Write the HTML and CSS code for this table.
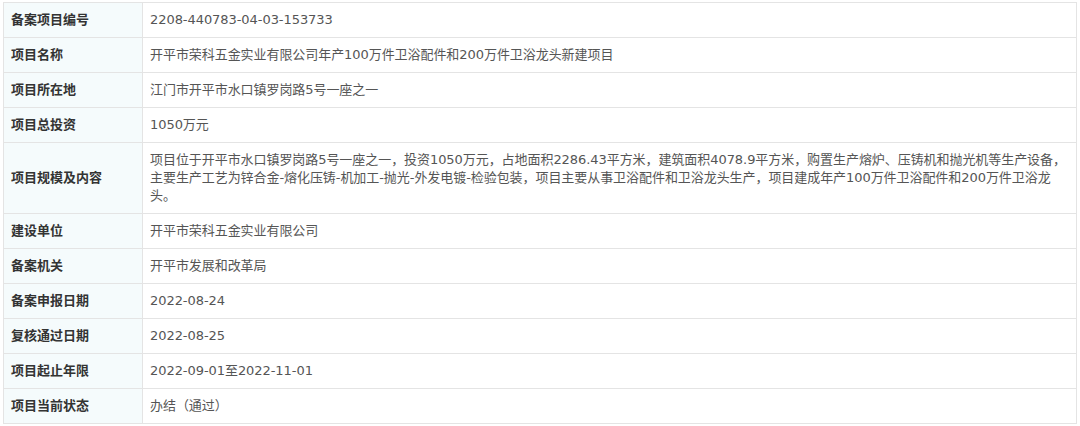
FILE: index.html
```html
<!DOCTYPE html>
<html lang="zh-CN">

<head>
    <meta charset="UTF-8">
    <meta name="viewport" content="width=device-width, initial-scale=1.0">
    <title>项目备案信息</title>
    <link rel="stylesheet" href="styles.css">
</head>

<body>
    <div class="record-wrap">
        <table class="record-table">
            <tbody>
                <tr>
                    <th>备案项目编号</th>
                    <td>2208-440783-04-03-153733</td>
                </tr>
                <tr>
                    <th>项目名称</th>
                    <td>开平市荣科五金实业有限公司年产100万件卫浴配件和200万件卫浴龙头新建项目</td>
                </tr>
                <tr>
                    <th>项目所在地</th>
                    <td>江门市开平市水口镇罗岗路5号一座之一</td>
                </tr>
                <tr>
                    <th>项目总投资</th>
                    <td>1050万元</td>
                </tr>
                <tr>
                    <th>项目规模及内容</th>
                    <td>项目位于开平市水口镇罗岗路5号一座之一，投资1050万元，占地面积2286.43平方米，建筑面积4078.9平方米，购置生产熔炉、压铸机和抛光机等生产设备，主要生产工艺为锌合金-熔化压铸-机加工-抛光-外发电镀-检验包装，项目主要从事卫浴配件和卫浴龙头生产，项目建成年产100万件卫浴配件和200万件卫浴龙头。</td>
                </tr>
                <tr>
                    <th>建设单位</th>
                    <td>开平市荣科五金实业有限公司</td>
                </tr>
                <tr>
                    <th>备案机关</th>
                    <td>开平市发展和改革局</td>
                </tr>
                <tr>
                    <th>备案申报日期</th>
                    <td>2022-08-24</td>
                </tr>
                <tr>
                    <th>复核通过日期</th>
                    <td>2022-08-25</td>
                </tr>
                <tr>
                    <th>项目起止年限</th>
                    <td>2022-09-01至2022-11-01</td>
                </tr>
                <tr>
                    <th>项目当前状态</th>
                    <td>办结（通过）</td>
                </tr>
            </tbody>
        </table>
    </div>
</body>

</html>
```

FILE: styles.css
```css
/* --- Базовые стили --- */
:root {
    --border-color: #e4e4e4;
    --label-bg: #f5fbfc;
    --label-color: #333333;
    --value-color: #555555;
    --font-family: "DejaVu Sans", "Noto Sans CJK SC", sans-serif;
}

body {
    margin: 0;
    background: #ffffff;
    font-family: var(--font-family);
}

.record-wrap {
    padding: 2px 3px;
}

/* --- Таблица --- */
.record-table {
    width: 100%;
    border-collapse: collapse;
    font-size: 13px;
    line-height: 18px;
}

.record-table th,
.record-table td {
    border: 1px solid var(--border-color);
    padding: 8px 7px;
    height: 18px;
    text-align: left;
    vertical-align: middle;
}

.record-table th {
    width: 124px;
    background: var(--label-bg);
    color: var(--label-color);
    font-weight: 700;
}

.record-table td {
    padding-right: 2px;
    color: var(--value-color);
    font-weight: 400;
    letter-spacing: -0.06px;
}
```
